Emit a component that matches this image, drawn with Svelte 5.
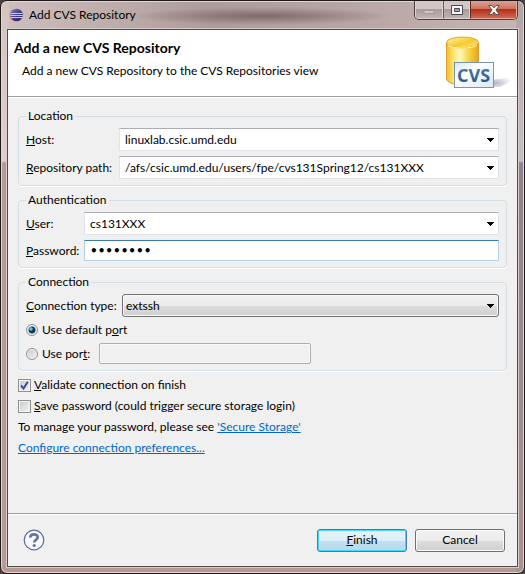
<script lang="ts">
	let host = $state("linuxlab.csic.umd.edu")
	let path = $state("/afs/csic.umd.edu/users/fpe/cvs131Spring12/cs131XXX")
	let user = $state("cs131XXX")
	let password = $state("eclipse1")
	let method = $state("extssh")
	let portMode = $state("default")
	let port = $state("")
	let validate = $state(true)
	let save = $state(false)
</script>

<svelte:head>
	<title>Add CVS Repository</title>
</svelte:head>

{#snippet arrow()}
	<svg class="arrow" width="7" height="4" viewBox="0 0 7 4" shape-rendering="crispEdges"><path d="M0 0H7V1H6V2H5V3H4V4H3V3H2V2H1V1H0Z" fill="#000" /></svg>
{/snippet}

<div class="window">
	<div class="titlebar">
		<svg class="logo" width="14" height="14" viewBox="0 0 14 14">
			<defs>
				<linearGradient id="ball" x1="0" y1="0" x2="1" y2="1">
					<stop offset="0" stop-color="#8583c4" />
					<stop offset="0.5" stop-color="#443d8c" />
					<stop offset="1" stop-color="#251f5d" />
				</linearGradient>
			</defs>
			<path d="M4 1A6.3 6.3 0 0 0 4 13Q0 7 4 1Z" fill="#e3a86a" />
			<circle cx="7.5" cy="7" r="6.3" fill="url(#ball)" />
			<path d="M1.4 5.5H13.5M1.2 7.5H13.8M1.5 9.5H13.5" stroke="#c3cbea" stroke-width="1" />
		</svg>
		<span class="caption">Add CVS Repository</span>
		<div class="controls">
			<button class="min" aria-label="Minimize">
				<svg width="12" height="12" viewBox="0 0 12 12"><rect x="1" y="6.5" width="10" height="3" fill="#cfc6c6" stroke="#a59a9b" /></svg>
			</button>
			<button class="max" aria-label="Maximize">
				<svg width="12" height="10" viewBox="0 0 12 10"><path d="M0.5 0.5H11.5V9.5H0.5ZM3.5 3.5V6.5H8.5V3.5Z" fill="#f6f6f6" fill-rule="evenodd" stroke="#4a4b58" /></svg>
			</button>
			<button class="close" aria-label="Close">
				<svg width="12" height="10" viewBox="0 0 12 10"><path d="M0.7 0.5H4L6 2.9L8 0.5H11.3L7.9 5L11.3 9.5H8L6 7.1L4 9.5H0.7L4.1 5Z" fill="#fff" stroke="#574448" stroke-width="0.9" /></svg>
			</button>
		</div>
	</div>

	<div class="client">
		<header>
			<div>
				<h1>Add a new CVS Repository</h1>
				<p>Add a new CVS Repository to the CVS Repositories view</p>
			</div>
			<svg width="70" height="56" viewBox="0 0 70 56" aria-hidden="true">
				<defs>
					<linearGradient id="gold">
						<stop offset="0" stop-color="#f0bd2c" />
						<stop offset="0.2" stop-color="#fbe268" />
						<stop offset="0.42" stop-color="#fff9bf" />
						<stop offset="0.7" stop-color="#f7d542" />
						<stop offset="1" stop-color="#e4a31d" />
					</linearGradient>
					<linearGradient id="lid" x1="0" y1="0" x2="1" y2="1">
						<stop offset="0" stop-color="#fff3a0" />
						<stop offset="0.55" stop-color="#f4cb32" />
						<stop offset="1" stop-color="#fbe77c" />
					</linearGradient>
					<linearGradient id="card" x1="0" y1="0" x2="1" y2="1">
						<stop offset="0" stop-color="#d4e6f3" />
						<stop offset="0.35" stop-color="#ffffff" />
						<stop offset="1" stop-color="#d7e8f5" />
					</linearGradient>
					<linearGradient id="ink" x1="0" y1="0" x2="0" y2="1">
						<stop offset="0" stop-color="#4c83b5" />
						<stop offset="1" stop-color="#234c80" />
					</linearGradient>
					<radialGradient id="shade" cx="0.2" cy="0.6" r="0.8">
						<stop offset="0" stop-color="#b5b5c2" />
						<stop offset="1" stop-color="#ffffff" />
					</radialGradient>
				</defs>
				<path d="M46 51V44L69 41Q66 47 56 51Z" fill="url(#shade)" />
				<path d="M2.5 7V43C2.5 46 9 48.5 18.5 48.5S34.5 46 34.5 43V7Z" fill="url(#gold)" stroke="#dda02c" />
				<ellipse cx="18.5" cy="6.5" rx="16" ry="5.5" fill="url(#lid)" stroke="#dfa52f" />
				<path d="M4 9C6 13 31 13 33 9" fill="none" stroke="#fff5a6" />
				<rect x="10.5" y="26.5" width="39" height="25" fill="url(#card)" stroke="#7896ae" />
				<text x="13" y="46" font-family="Open Sans" font-size="18" font-weight="700" fill="url(#ink)">CVS</text>
			</svg>
		</header>

		<main>
			<fieldset>
				<legend>Location</legend>
				<div class="row">
					<label class="wide" for="host"><u>H</u>ost:</label>
					<div class="combo">
						<input id="host" bind:value={host} />
						<button aria-label="Previous hosts">{@render arrow()}</button>
					</div>
				</div>
				<div class="row">
					<label class="wide" for="path"><u>R</u>epository path:</label>
					<div class="combo">
						<input id="path" bind:value={path} />
						<button aria-label="Previous paths">{@render arrow()}</button>
					</div>
				</div>
			</fieldset>

			<fieldset>
				<legend>Authentication</legend>
				<div class="row">
					<label class="narrow" for="user"><u>U</u>ser:</label>
					<div class="combo">
						<input id="user" bind:value={user} />
						<button aria-label="Previous users">{@render arrow()}</button>
					</div>
				</div>
				<div class="row">
					<label class="narrow" for="password"><u>P</u>assword:</label>
					<input class="password" id="password" type="password" bind:value={password} />
				</div>
			</fieldset>

			<fieldset>
				<legend>Connection</legend>
				<div class="row">
					<label class="type" for="method"><u>C</u>onnection type:</label>
					<div class="dropdown">
						<select id="method" bind:value={method}>
							<option>ext</option>
							<option>extssh</option>
							<option>pserver</option>
						</select>
						{@render arrow()}
					</div>
				</div>
				<label class="check">
					<input type="radio" name="port" value="default" bind:group={portMode} />
					<span>Use default p<u>o</u>rt</span>
				</label>
				<div class="row">
					<label class="check port">
						<input type="radio" name="port" value="custom" bind:group={portMode} />
						<span>Use por<u>t</u>:</span>
					</label>
					<input class="number" aria-label="Port number" bind:value={port} disabled={portMode == "default"} />
				</div>
			</fieldset>

			<label class="check">
				<input type="checkbox" bind:checked={validate} />
				<span><u>V</u>alidate connection on finish</span>
			</label>
			<label class="check">
				<input type="checkbox" bind:checked={save} />
				<span><u>S</u>ave password (could trigger secure storage login)</span>
			</label>
			<p>To manage your password, please see <a href="#storage">'Secure Storage'</a></p>
			<p><a href="#preferences">Configure connection preferences...</a></p>
		</main>

		<footer>
			<button class="help" aria-label="Help">
				<svg width="22" height="22" viewBox="0 0 22 22">
					<circle cx="11" cy="11" r="9.8" fill="#f6f8fc" stroke="#59698a" stroke-width="1.2" />
					<path d="M7.3 8.6C7.2 4.4 14.8 4.3 14.8 8.3C14.8 10.7 11.2 10.6 11.2 13.6" fill="none" stroke="#65759a" stroke-width="2.6" />
					<circle cx="11.2" cy="16.5" r="1.6" fill="#65759a" />
				</svg>
			</button>
			<button class="push default"><span><u>F</u>inish</span></button>
			<button class="push">Cancel</button>
		</footer>
	</div>
</div>

<style>
	:global(body) {
		background: #4b4245;
	}

	.window, input, select, button {
		font-family: Lato, "Open Sans", sans-serif;
		font-size: 12px;
		line-height: 16px;
		color: #000;
	}

	.window {
		box-sizing: border-box;
		min-height: 100vh;
		display: flex;
		flex-direction: column;
		padding: 0 6px 6px;
		border: 1px solid #201819;
		border-radius: 7px;
		box-shadow: inset 0 0 0 1px #e3d7d5;
		background:
			linear-gradient(#d3c3c1 0, #dccfcd 160px, #b49b96 162px) left / 8px 100% no-repeat,
			linear-gradient(#b3a4a5 0, #c3bfc6 160px, #8c8490 162px, #a99391) right / 8px 100% no-repeat,
			radial-gradient(ellipse 130px 9px at 260px 15px, #7e6a69, transparent) 0 0 / 100% 29px no-repeat,
			linear-gradient(90deg, #cdc0be, #ae9c9a 40%, #b7a5a3 65%, #c5b5b3) 0 0 / 100% 29px no-repeat,
			#b39a96;
	}

	.titlebar {
		display: flex;
		align-items: flex-start;
		height: 28px;
	}

	.logo {
		margin: 7px 6px 0 2px;
	}

	.caption {
		flex: 1;
		padding-top: 6px;
	}

	.controls {
		display: flex;
		height: 18px;
		border: 1px solid #4b3f40;
		border-top: 0;
		border-radius: 0 0 5px 5px;
		overflow: hidden;
	}

	.controls button {
		display: flex;
		align-items: center;
		justify-content: center;
		padding: 0;
		width: 28px;
		border: 1px solid #ded2d1;
		border-top: 0;
		background: linear-gradient(#d2c7c6 50%, #ab9c9b 50%, #c1b3b2);
	}

	.controls .max {
		width: 27px;
		border-left-color: #6c5d5d;
	}

	.controls .close {
		width: 47px;
		border-color: #e2aa9e;
		border-left-color: #5b2c27;
		background: linear-gradient(#dba194, #cf6e5b 50%, #b5301a 50%, #d3674c);
	}

	.client {
		flex: 1;
		display: flex;
		flex-direction: column;
		border: 1px solid #54484a;
		box-shadow: 0 0 0 1px #d9cbc9;
		background: #f0f0f0;
	}

	header {
		display: flex;
		justify-content: space-between;
		height: 66px;
		border-bottom: 1px solid #a0a0a0;
		background: #fff;
	}

	header svg {
		margin: 6px 3px 0 0;
	}

	h1 {
		margin: 9px 0 0 6px;
		font-size: 14px;
		line-height: 18px;
	}

	header p {
		margin: 6px 0 0 14px;
	}

	main {
		flex: 1;
		display: flex;
		flex-direction: column;
		gap: 5px;
		padding: 10px 10px 0;
		border-top: 1px solid #fff;
	}

	fieldset {
		display: flex;
		flex-direction: column;
		gap: 5px;
		min-width: 0;
		margin: 0 0 1px;
		padding: 4px 7px 6px;
		border: 1px solid #d5dfe5;
		border-radius: 4px;
		box-shadow: 0 1px 0 #fff;
	}

	legend {
		padding: 0 2px;
		height: 16px;
	}

	.row {
		display: flex;
		align-items: center;
	}

	.row > label {
		flex: none;
	}

	.wide {
		width: 93px;
	}

	.narrow {
		width: 58px;
	}

	.type {
		width: 96px;
	}

	.combo {
		flex: 1;
		display: flex;
		box-sizing: border-box;
		height: 23px;
		border: 1px solid #e2e3ea;
		border-top-color: #abadb3;
		background: #fff;
	}

	.combo input {
		flex: 1;
		min-width: 0;
		padding: 0 5px;
		border: 0;
		background: none;
		outline: 0;
	}

	.combo button {
		width: 15px;
		padding: 0;
		border: 0;
		background: none;
	}

	.arrow {
		display: block;
		margin: auto;
	}

	.password {
		flex: 1;
		min-width: 0;
		box-sizing: border-box;
		height: 21px;
		padding: 0 5px;
		border: 1px solid #b5cfe7;
		border-top-color: #3d7bad;
		background: #fff;
		font-family: "DejaVu Sans", sans-serif;
		font-weight: 700;
		outline: 0;
	}

	.dropdown {
		flex: 1;
		display: grid;
		align-items: center;
	}

	.dropdown > :global(*) {
		grid-area: 1 / 1;
	}

	.dropdown .arrow {
		margin: 0 5px 0 auto;
		pointer-events: none;
	}

	select {
		appearance: none;
		width: 100%;
		height: 23px;
		padding: 0 3px;
		border: 1px solid #707070;
		border-radius: 3px;
		box-shadow: inset 0 0 0 1px #f8f8f8;
		background: linear-gradient(#f2f2f2, #ebebeb 50%, #dddddd 50%, #cfcfcf);
	}

	.check {
		display: flex;
		align-items: center;
		gap: 4px;
		height: 16px;
	}

	.port {
		width: 73px;
	}

	.check input {
		appearance: none;
		box-sizing: border-box;
		width: 12px;
		height: 12px;
		margin: 0;
		border: 1px solid #8e8f8f;
		box-shadow: inset 0 0 0 1px #f4f4f4;
		background: linear-gradient(135deg, #c6cace, #f4f4f4);
	}

	.check input[type="checkbox"] {
		width: 13px;
		height: 13px;
		margin-right: -1px;
	}

	.check input[type="checkbox"]:checked {
		background: url("data:image/svg+xml,%3Csvg xmlns='http://www.w3.org/2000/svg' viewBox='0 0 11 11'%3E%3Cpath d='M2 5.3L4.5 8.5L8.8 1.8' fill='none' stroke='%233a4f8f' stroke-width='2'/%3E%3C/svg%3E"), linear-gradient(135deg, #c6cace, #f4f4f4);
	}

	.check input[type="radio"] {
		border-radius: 50%;
	}

	.check input[type="radio"]:checked {
		background: radial-gradient(circle at 4px 4px, #8fd6ef 0, #2585ad 2px, transparent 2px), radial-gradient(circle, #0e3853 3px, #dde3e6 4px);
	}

	.number {
		box-sizing: border-box;
		width: 212px;
		height: 21px;
		padding: 0 5px;
		border: 1px solid #afafaf;
		border-radius: 2px;
		box-shadow: inset 0 0 0 1px #f9f9f9;
		background: #f0f0f0;
	}

	p {
		margin: 0;
	}

	a {
		color: #0066cc;
	}

	footer {
		display: flex;
		align-items: center;
		gap: 8px;
		height: 52px;
		padding: 0 12px 0 15px;
		border-top: 1px solid #a0a0a0;
		box-shadow: inset 0 1px 0 #fff;
	}

	.help {
		display: flex;
		margin-right: auto;
		padding: 0;
		border: 0;
		background: none;
	}

	.push {
		width: 90px;
		height: 23px;
		padding: 0;
		border: 1px solid #707070;
		border-radius: 3px;
		box-shadow: inset 0 0 0 1px #fafafa;
		background: linear-gradient(#f2f2f2, #ebebeb 50%, #dddddd 50%, #cfcfcf);
	}

	.default {
		border-color: #3c7fb1;
		box-shadow: inset 0 0 0 1px #46d8fb;
		background: linear-gradient(#eaf3f8, #dceef7 50%, #c4e1ef 50%, #b5d8ea);
	}
</style>
